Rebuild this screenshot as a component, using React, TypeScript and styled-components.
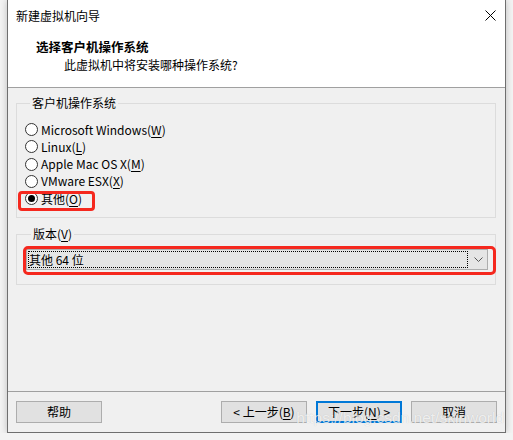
import React from 'react';
import styled, { createGlobalStyle } from 'styled-components';

const FONT = `"Noto Sans CJK SC", "Noto Sans", sans-serif`;

const Global = createGlobalStyle`
  html, body { margin: 0; padding: 0; background: #f3f3f3; }
  body { font-family: ${FONT}; font-size: 12px; color: #000; }
  *, *::before, *::after { box-sizing: border-box; }
`;

const Window = styled.div`
  position: relative;
  width: 499px;
  height: 433px;
  margin-left: 7px;
  border: 1px solid #6f6f6f;
  border-top: none;
  background: #f0f0f0;
  display: flex;
  flex-direction: column;
  box-shadow: 0 0 7px rgba(0, 0, 0, 0.22);
`;

const TitleBar = styled.div`
  height: 30px;
  background: #fff;
  display: flex;
  align-items: center;
  justify-content: space-between;
  padding: 0 9px 0 8px;
  font-size: 12px;
`;

const Header = styled.div`
  height: 58px;
  background: #fff;
  border-bottom: 1px solid #a0a0a0;
  padding: 9px 0 0 28px;
  display: flex;
  flex-direction: column;
  gap: 2px;
`;

const HeaderTitle = styled.div`
  font-weight: bold;
  font-size: 12.5px;
  line-height: 16px;
`;

const HeaderSub = styled.div`
  line-height: 16px;
  padding-left: 28px;
`;

const Body = styled.div`
  flex: 1;
  padding: 0 9px 0 8px;
`;

const Group = styled.fieldset<{ $top: number; $pad: string }>`
  margin: ${(p) => p.$top}px 0 0;
  border: 1px solid #dcdcdc;
  padding: ${(p) => p.$pad};
  min-width: 0;
`;

const Legend = styled.legend`
  padding: 0 2px;
  margin-left: 5px;
  line-height: 16px;
`;

const RadioRow = styled.label<{ $mark?: boolean }>`
  position: relative;
  height: 17.25px;
  display: flex;
  align-items: center;
  gap: 3px;
  line-height: 16px;
  ${(p) =>
    p.$mark
      ? `&::after {
    content: '';
    position: absolute;
    left: -7px;
    top: 0.5px;
    width: 77px;
    height: 20px;
    border: 3px solid #f5281e;
    border-radius: 4px;
  }`
      : ''}
`;

const Circle = styled.span<{ $checked?: boolean }>`
  width: 13px;
  height: 13px;
  border-radius: 50%;
  border: 1px solid #333;
  background: #fff;
  display: flex;
  align-items: center;
  justify-content: center;
  flex: none;
  &::before {
    content: '';
    width: 7px;
    height: 7px;
    border-radius: 50%;
    background: ${(p) => (p.$checked ? '#000' : 'transparent')};
  }
`;

const U = styled.span`
  text-decoration: underline;
  text-underline-offset: 2px;
`;

const Combo = styled.div`
  position: relative;
  height: 21px;
  border: 1px solid #adadad;
  background: #e5e5e5;
  display: flex;
  align-items: stretch;
  &::after {
    content: '';
    position: absolute;
    top: -4px;
    left: -4px;
    right: -9px;
    bottom: -6px;
    border: 3px solid #f5281e;
    border-radius: 5px;
  }
`;

const ComboText = styled.div`
  flex: 1;
  margin: 1px;
  border: 1px dotted #000;
  padding-left: 0;
  display: flex;
  align-items: center;
  line-height: 16px;
`;

const ComboArrow = styled.div`
  width: 18px;
  display: flex;
  align-items: center;
  justify-content: center;
`;

const Footer = styled.div`
  border-top: 1px solid #a0a0a0;
  padding: 9px 8px 9px;
  display: flex;
  gap: 9px;
`;

const Spacer = styled.div`
  flex: 1;
`;

const Button = styled.div<{ $primary?: boolean }>`
  width: 86px;
  height: 22px;
  background: #e1e1e1;
  border: ${(p) => (p.$primary ? '2px solid #0078d7' : '1px solid #adadad')};
  display: flex;
  align-items: center;
  justify-content: center;
  line-height: 16px;
  white-space: pre;
`;

const Watermark = styled.div`
  position: absolute;
  right: 1px;
  bottom: 5px;
  font-family: "Liberation Sans", Arial, sans-serif;
  font-size: 15.5px;
  color: rgba(255, 255, 255, 0.75);
  text-shadow: 0 0 1px rgba(0, 0, 0, 0.18);
  pointer-events: none;
`;

const CloseIcon = () => (
  <svg width="11" height="11" viewBox="0 0 11 11">
    <path d="M0.5 0.5 L10.5 10.5 M10.5 0.5 L0.5 10.5" stroke="#000" strokeWidth="1" />
  </svg>
);

const Chevron = () => (
  <svg width="9" height="5" viewBox="0 0 9 5">
    <path d="M0.5 0.5 L4.5 4.5 L8.5 0.5" stroke="#555" strokeWidth="1" fill="none" />
  </svg>
);

const options: { label: string; key: string; checked?: boolean }[] = [
  { label: 'Microsoft Windows', key: 'W' },
  { label: 'Linux', key: 'L' },
  { label: 'Apple Mac OS X', key: 'M' },
  { label: 'VMware ESX', key: 'X' },
  { label: '其他', key: 'O', checked: true },
];

export default function App() {
  return (
    <>
      <Global />
      <Window>
        <TitleBar>
          <span>新建虚拟机向导</span>
          <CloseIcon />
        </TitleBar>
        <Header>
          <HeaderTitle>选择客户机操作系统</HeaderTitle>
          <HeaderSub>此虚拟机中将安装哪种操作系统?</HeaderSub>
        </Header>
        <Body>
          <Group $top={7} $pad="10px 0 10px 8px">
            <Legend>客户机操作系统</Legend>
            {options.map((o) => (
              <RadioRow key={o.key} $mark={o.checked}>
                <Circle $checked={o.checked} />
                <span>
                  {o.label}(<U>{o.key}</U>)
                </span>
              </RadioRow>
            ))}
          </Group>
          <Group $top={8} $pad="7px 7px 14px 9px">
            <Legend>
              版本(<U>V</U>)
            </Legend>
            <Combo>
              <ComboText>其他 64 位</ComboText>
              <ComboArrow>
                <Chevron />
              </ComboArrow>
            </Combo>
          </Group>
        </Body>
        <Footer>
          <Button>帮助</Button>
          <Spacer />
          <Button>
            {'< 上一步('}
            <U>B</U>)
          </Button>
          <Button $primary>
            {'下一步('}
            <U>N</U>
            {') >'}
          </Button>
          <Button>取消</Button>
        </Footer>
        <Watermark>https://blog.csdn.net/skinworld</Watermark>
      </Window>
    </>
  );
}
